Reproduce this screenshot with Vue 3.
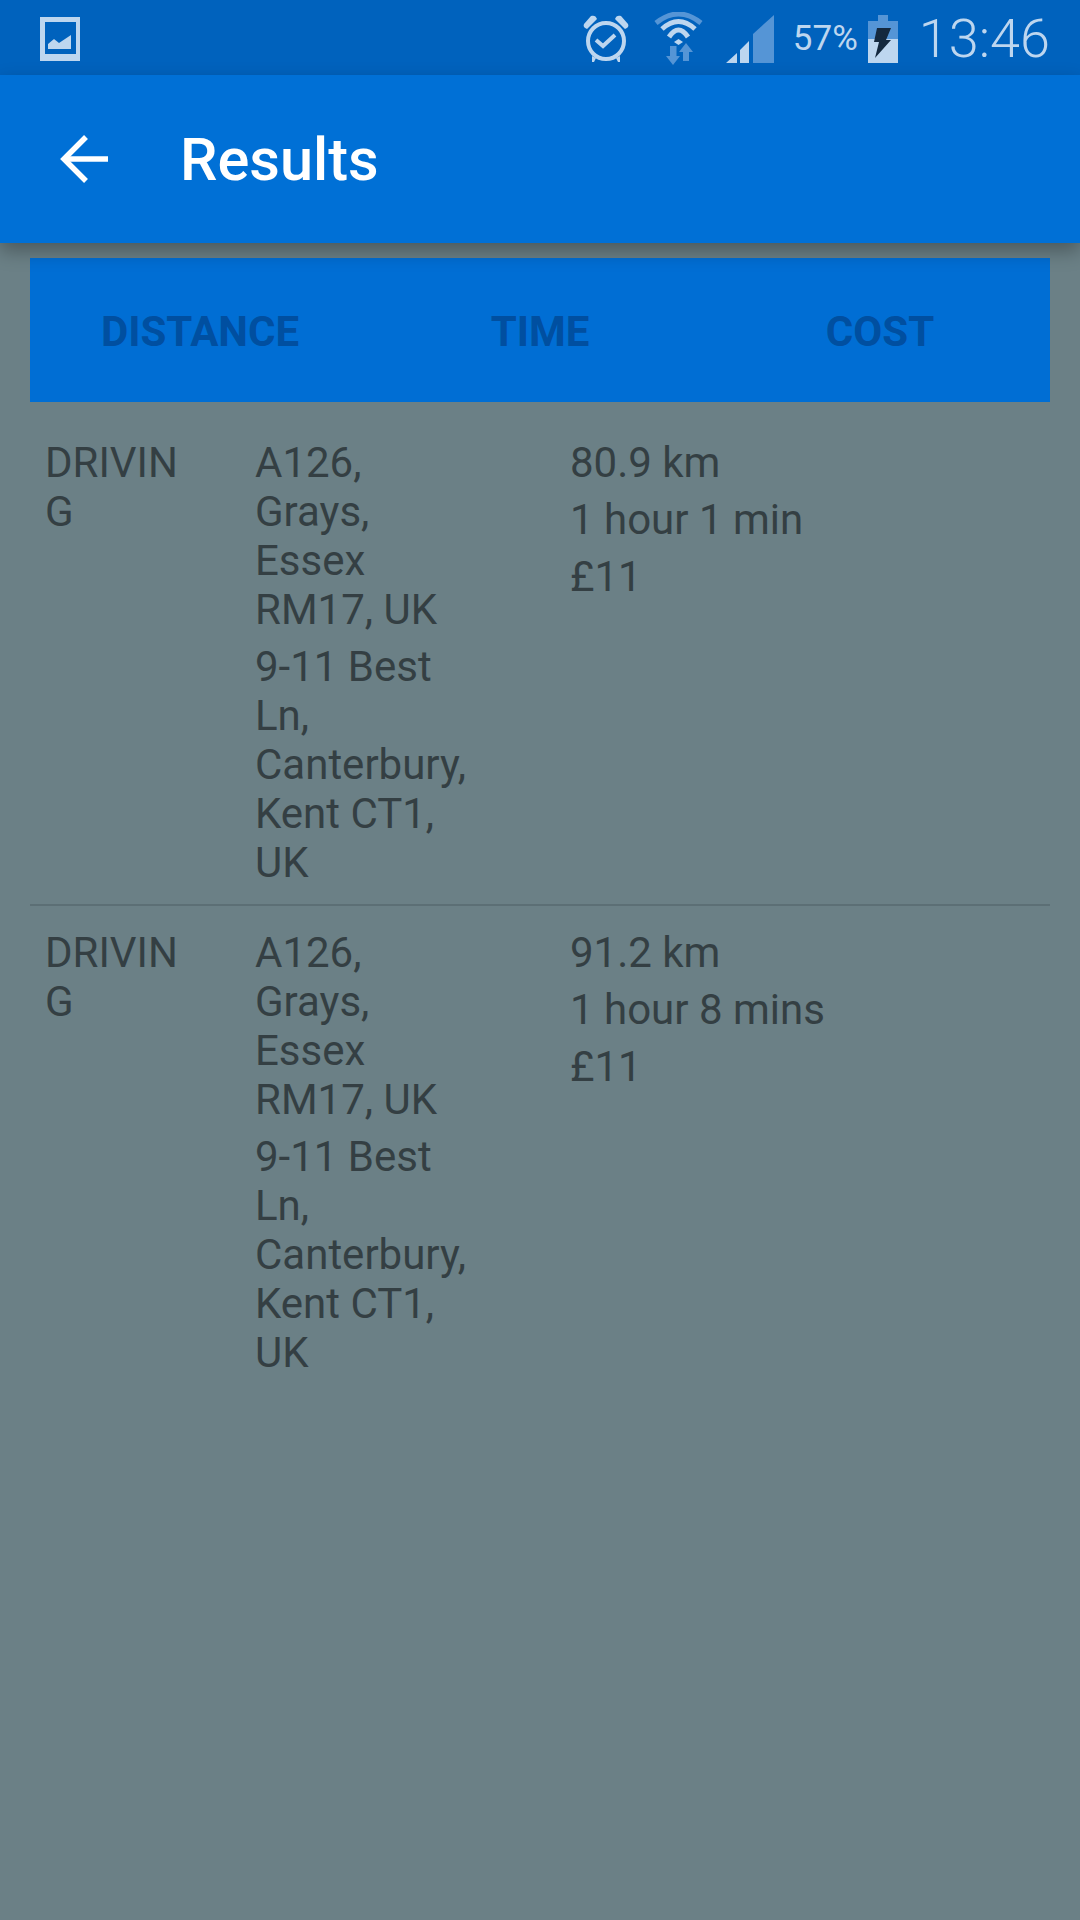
<template>
  <div class="screen">
    <div class="status-bar">
      <svg class="pic-icon" width="40" height="44" viewBox="0 0 40 44">
        <path class="light" fill-rule="evenodd" d="M0 0H40V44H0ZM5 5V37H36V5Z" />
        <path class="light" d="M8 32V27L14 22L19 26L31 18V32Z" />
      </svg>
      <div class="status-right">
        <svg class="alarm" width="46" height="47" viewBox="0 0 46 47">
          <circle cx="23" cy="26" r="18" class="line" />
          <path class="line" d="M13 25L20 31L32 20" />
          <path class="light" d="M1 9L8 1C11 0 13 1 14 4L4 14C1 13 0 11 1 9ZM45 9L38 1C35 0 33 1 32 4L42 14C45 13 46 11 45 9Z" />
          <path class="light" d="M9 41L13 43L11 47H9ZM37 41L33 43L35 47H37Z" />
        </svg>
        <svg class="wifi" width="51" height="54" viewBox="0 0 51 54">
          <path class="arc dim" d="M3 11Q25.5 -7 48 11" />
          <path class="arc" d="M9 17Q25.5 2 42 17" />
          <path class="arc" d="M16 25Q25.5 11 35 25" />
          <path class="light" d="M21 30L25.5 27L30 30L25.5 33Z" />
          <path class="dim-fill" d="M17 34H23.5V44H27L20 53L13 44H17Z" />
          <path class="dim-fill" d="M33 31L40 40H36V49H30V40H26Z" />
        </svg>
        <svg class="signal" width="48" height="48" viewBox="0 0 48 48">
          <path class="dim-fill" d="M27 48V19L48 0V48Z" />
          <path class="light" d="M14 48V35L23 26V48ZM0 48L11 38V48Z" />
        </svg>
        <span class="pct">57%</span>
        <svg class="battery" width="30" height="48" viewBox="0 0 30 48">
          <path class="dim-fill" d="M10 0H20V6H30V24H0V6H10Z" />
          <path class="light" d="M0 24H30V48H0Z" />
          <path fill="#14293f" d="M9 13H23L18 25H23L7 43L11 27H6Z" />
        </svg>
        <span class="clock">13:46</span>
      </div>
    </div>

    <header class="app-bar">
      <svg class="back" width="48" height="48" viewBox="0 0 48 48">
        <path d="M48 24H5" />
        <path d="M26 2L4 24L26 46" />
      </svg>
      <span class="title">Results</span>
    </header>

    <div class="tabs">
      <span v-for="tab in tabs" :key="tab" class="tab">{{ tab }}</span>
    </div>

    <div class="list">
      <div v-for="(row, i) in rows" :key="i" class="row">
        <div class="mode">{{ row.mode }}</div>
        <div class="places">
          <div>{{ row.from }}</div>
          <div>{{ row.to }}</div>
        </div>
        <div class="stats">
          <div>{{ row.distance }}</div>
          <div>{{ row.time }}</div>
          <div>{{ row.cost }}</div>
        </div>
      </div>
    </div>
  </div>
</template>

<script setup>
const tabs = ['DISTANCE', 'TIME', 'COST'];

const rows = [
  {
    mode: 'DRIVING',
    from: 'A126, Grays, Essex RM17, UK',
    to: '9-11 Best Ln, Canterbury, Kent CT1, UK',
    distance: '80.9 km',
    time: '1 hour 1 min',
    cost: '£11',
  },
  {
    mode: 'DRIVING',
    from: 'A126, Grays, Essex RM17, UK',
    to: '9-11 Best Ln, Canterbury, Kent CT1, UK',
    distance: '91.2 km',
    time: '1 hour 8 mins',
    cost: '£11',
  },
];
</script>

<style>
html,
body {
  margin: 0;
  background: #6b8086;
}
</style>

<style scoped>
.screen {
  width: 1080px;
  height: 1920px;
  overflow: hidden;
  background: #6b8086;
  font-family: Roboto, sans-serif;
  color: #343f43;
}
.status-bar {
  height: 75px;
  box-sizing: border-box;
  padding: 2px 30px 0 40px;
  display: flex;
  align-items: center;
  justify-content: space-between;
  background: #0062bd;
}
.status-right {
  display: flex;
  align-items: center;
  color: #bdd6ef;
}
.light {
  fill: #bdd6ef;
}
.dim-fill {
  fill: #5595d6;
}
.line {
  fill: none;
  stroke: #bdd6ef;
  stroke-width: 4;
}
.arc {
  fill: none;
  stroke: #bdd6ef;
  stroke-width: 5;
}
.arc.dim {
  stroke: #5595d6;
}
.alarm {
  margin-right: 24px;
}
.wifi {
  margin-right: 22px;
}
.signal {
  margin-right: 19px;
}
.pct {
  font-size: 35px;
  margin-right: 10px;
}
.battery {
  margin-right: 21px;
}
.clock {
  font-size: 54px;
  font-weight: 300;
}
.app-bar {
  position: relative;
  z-index: 1;
  height: 168px;
  display: flex;
  align-items: center;
  padding-left: 60px;
  background: #0070d6;
  box-shadow: 0 8px 18px rgba(0, 0, 0, 0.3);
}
.back {
  fill: none;
  stroke: #fff;
  stroke-width: 5.5;
  margin-right: 72px;
}
.title {
  font-size: 59.5px;
  font-weight: 500;
  color: #fff;
  padding-top: 2px;
}
.tabs {
  height: 144px;
  margin: 15px 30px 0;
  display: grid;
  grid-template-columns: 340px 340px 340px;
  align-items: center;
  justify-items: center;
  background: #006ed4;
}
.tab {
  font-size: 42px;
  font-weight: 700;
  color: #004fa0;
  padding-top: 2px;
}
.list {
  margin: 0 30px;
  padding-top: 14px;
}
.row {
  display: grid;
  grid-template-columns: 210px 315px 1fr;
  padding: 22px 0 17px 15px;
  border-bottom: 2px solid #5c6f75;
  font-size: 42px;
  line-height: 49px;
}
.row:last-child {
  border-bottom: none;
}
.mode {
  width: 150px;
  word-break: break-all;
}
.places {
  width: 222px;
  display: flex;
  flex-direction: column;
  gap: 8px;
}
.stats {
  display: flex;
  flex-direction: column;
  gap: 8px;
}
</style>
